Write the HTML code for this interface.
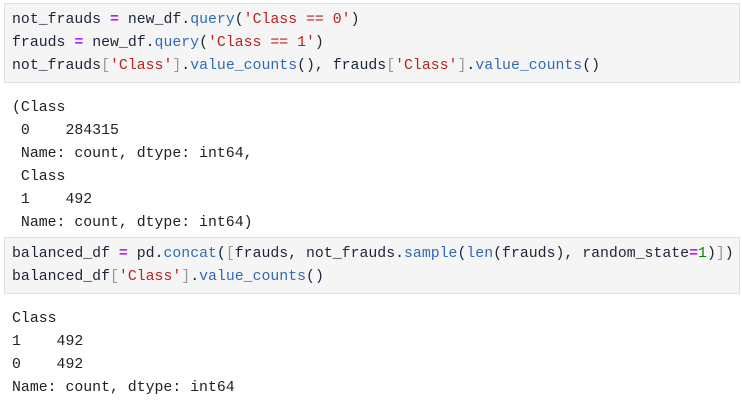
<html><head><style>
body{margin:0;background:#fff;width:742px;height:401px;overflow:hidden;font-family:"Liberation Mono",monospace;font-size:14.85px;color:#212121}
.c{position:absolute;left:4px;width:736px;background:#f5f5f5;border:1px solid #e0e0e0;box-sizing:border-box}
pre{margin:0;font:inherit;line-height:23px;white-space:pre;position:absolute;left:12px}
.k{color:#1b2438}
.o{color:#aa22ff;font-weight:bold}.f{color:#2f6bb6}.s{color:#ba2121}.g{color:#999}
</style></head><body>
<div class="c" style="top:3px;height:80px"></div>
<pre class="k" style="top:9px">not_frauds <span class="o">=</span> new_df.<span class="f">query</span>(<span class="s">'Class == 0'</span>)
frauds <span class="o">=</span> new_df.<span class="f">query</span>(<span class="s">'Class == 1'</span>)
not_frauds<span class="g">[</span><span class="s">'Class'</span><span class="g">]</span>.<span class="f">value_counts</span>(), frauds<span class="g">[</span><span class="s">'Class'</span><span class="g">]</span>.<span class="f">value_counts</span>()</pre>
<pre style="top:97px">(Class
 0    284315
 Name: count, dtype: int64,
 Class
 1    492
 Name: count, dtype: int64)</pre>
<div class="c" style="top:237px;height:57px"></div>
<pre class="k" style="top:243px">balanced_df <span class="o">=</span> pd.<span class="f">concat</span>(<span class="g">[</span>frauds, not_frauds.<span class="f">sample</span>(<span class="f">len</span>(frauds), random_state<span class="o">=</span><span style="color:#080">1</span>)<span class="g">]</span>)
balanced_df<span class="g">[</span><span class="s">'Class'</span><span class="g">]</span>.<span class="f">value_counts</span>()</pre>
<pre style="top:308px">Class
1    492
0    492
Name: count, dtype: int64</pre>
</body></html>
